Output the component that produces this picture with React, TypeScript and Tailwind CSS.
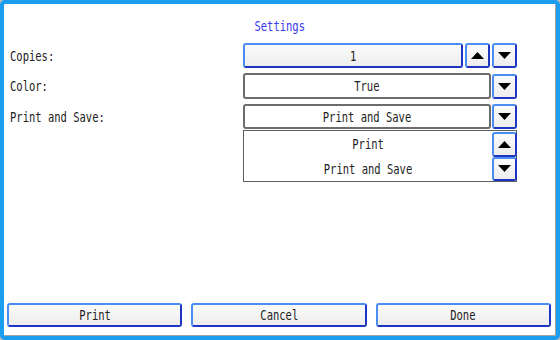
import React from "react";

const font = { fontFamily: '"DejaVu Sans Mono", "Liberation Mono", monospace' };

function T({ children, left }: { children: React.ReactNode; left?: boolean }) {
  return (
    <span
      className={`inline-block align-top whitespace-nowrap text-[14px] leading-[16px] scale-x-[0.75] ${left ? "origin-left" : "origin-center"}`}
      style={font}
    >
      {children}
    </span>
  );
}

const blueBtn =
  "border-2 border-t-[#4a8ef2] border-l-[#4a8ef2] border-r-[#1c36c2] border-b-[#1c36c2] rounded-[3px] bg-gradient-to-b from-[#fbfbfb] to-[#ededed]";

function Arrow({ up, className = "" }: { up?: boolean; className?: string }) {
  return (
    <div className={`w-[25px] h-[25px] flex items-center justify-center ${blueBtn} ${className}`}>
      <svg width="13" height="7" viewBox="0 0 13 7">
        {up ? <polygon points="0,7 6.5,0 13,7" fill="#000" /> : <polygon points="0,0 13,0 6.5,7" fill="#000" />}
      </svg>
    </div>
  );
}

export default function App() {
  return (
    <div className="w-[560px] h-[340px] bg-[#bdbdbd]">
      <div className="w-full h-full rounded-[5px] border-4 border-[#1b9df0] bg-white flex flex-col shadow-[inset_-1px_-1px_0_#a3a3a3] text-[#222]">
        <div className="h-[39px] pt-[14px] flex justify-center items-start leading-[16px] text-[#3838ee]">
          <T>Settings</T>
        </div>
        <div className="flex flex-col pl-[6px]">
          {/* Copies */}
          <div className="flex h-[25px] items-center">
            <div className="w-[233px] flex items-center">
              <T left>Copies:</T>
            </div>
            <div className={`w-[220px] h-[25px] flex items-center justify-center ${blueBtn} from-[#f4f4f4] to-[#eeeeee]`}>
              <T>1</T>
            </div>
            <Arrow up className="ml-[2px]" />
            <Arrow className="ml-[2px]" />
          </div>
          {/* Color */}
          <div className="flex h-[26px] items-center mt-[5px]">
            <div className="w-[233px] flex items-center">
              <T left>Color:</T>
            </div>
            <div className="w-[248px] h-[26px] flex items-center justify-center border-2 border-[#6c6c6c] rounded-[3px] bg-white">
              <T>True</T>
            </div>
            <Arrow className="ml-[1px]" />
          </div>
          {/* Print and Save */}
          <div className="flex h-[25px] items-center mt-[5px]">
            <div className="w-[233px] flex items-center">
              <T left>Print and Save:</T>
            </div>
            <div className="w-[248px] h-[25px] flex items-center justify-center border-2 border-[#6c6c6c] rounded-[3px] bg-white">
              <T>Print and Save</T>
            </div>
            <Arrow className="ml-[1px]" />
          </div>
          {/* List */}
          <div className="flex mt-[1px]">
            <div className="w-[233px]" />
            <div className="w-[274px] h-[52px] border border-[#5e5e5e] bg-white flex">
              <div className="flex-1 flex flex-col">
                <div className="h-[25px] flex items-center justify-center">
                  <T>Print</T>
                </div>
                <div className="h-[25px] flex items-center justify-center">
                  <T>Print and Save</T>
                </div>
              </div>
              <div className="flex flex-col -mr-px pt-px">
                <Arrow up />
                <Arrow />
              </div>
            </div>
          </div>
        </div>
        <div className="flex-1" />
        <div className="grid grid-cols-3 gap-[9px] pl-[3px] pr-[5px] pb-[9px]">
          {["Print", "Cancel", "Done"].map((l) => (
            <div key={l} className={`h-[24px] flex items-center justify-center ${blueBtn}`}>
              <T>{l}</T>
            </div>
          ))}
        </div>
      </div>
    </div>
  );
}
